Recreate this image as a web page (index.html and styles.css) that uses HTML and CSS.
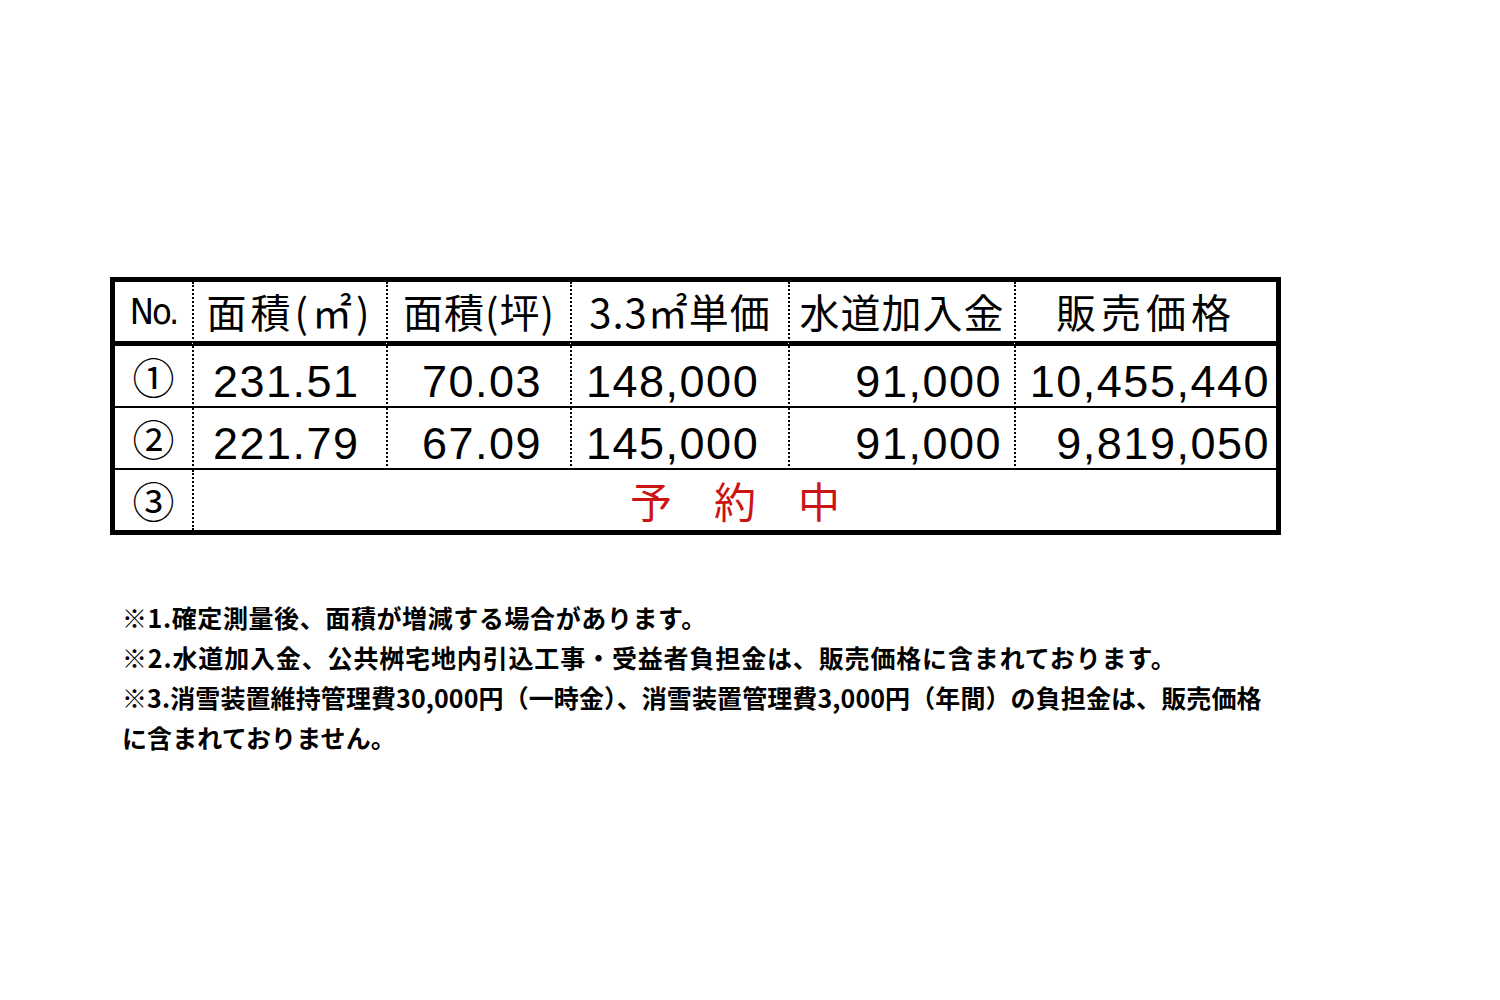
FILE: index.html
```html
<!DOCTYPE html>
<html lang="ja">
<head>
<meta charset="utf-8">
<title>販売価格表</title>
<link rel="stylesheet" href="styles.css">
</head>
<body>
<div class="page">
  <table class="price">
    <colgroup>
      <col class="c1"><col class="c2"><col class="c3"><col class="c4"><col class="c5"><col class="c6">
    </colgroup>
    <thead>
      <tr>
        <th class="no">No.</th>
        <th class="sq">面積(㎡)</th>
        <th>面積(坪)</th>
        <th>3.3㎡単価</th>
        <th>水道加入金</th>
        <th class="wide">販売価格</th>
      </tr>
    </thead>
    <tbody>
      <tr>
        <td class="circ">①</td>
        <td class="num a2">231.51</td>
        <td class="num a3">70.03</td>
        <td class="num a4">148,000</td>
        <td class="num a5">91,000</td>
        <td class="num a6">10,455,440</td>
      </tr>
      <tr>
        <td class="circ">②</td>
        <td class="num a2">221.79</td>
        <td class="num a3">67.09</td>
        <td class="num a4">145,000</td>
        <td class="num a5">91,000</td>
        <td class="num a6">9,819,050</td>
      </tr>
      <tr class="last">
        <td class="circ">③</td>
        <td class="reserved" colspan="5">予　約　中</td>
      </tr>
    </tbody>
  </table>
  <div class="notes">
    <p>※1.確定測量後、面積が増減する場合があります。</p>
    <p class="n2">※2.水道加入金、公共桝宅地内引込工事・受益者負担金は、販売価格に含まれております。</p>
    <p class="n3">※3.消雪装置維持管理費30,000円（一時金）、消雪装置管理費3,000円（年間）の負担金は、販売価格<br>に含まれておりません。</p>
  </div>
</div>
</body>
</html>
```
FILE: styles.css
```css
html, body {
  margin: 0;
  padding: 0;
  background: #ffffff;
  color: #000000;
}

.page {
  padding: 277px 0 0 110px;
  font-family: "Noto Sans CJK JP", "Liberation Sans", sans-serif;
}

.price {
  table-layout: fixed;
  border-collapse: separate;
  border-spacing: 0;
  border: 5px solid #000;
  width: 1171px;
  box-sizing: border-box;
}

.c1 { width: 77px; }
.c2 { width: 194px; }
.c3 { width: 184px; }
.c4 { width: 218px; }
.c5 { width: 226px; }
.c6 { width: 262px; }

.price th,
.price td {
  padding: 0;
  box-sizing: border-box;
  border-left: 2px dotted #000;
  white-space: nowrap;
  overflow: hidden;
}

.price th:first-child,
.price td:first-child {
  border-left: none;
}

.price th {
  height: 64px;
  border-bottom: 5px solid #000;
  font-weight: 400;
  font-size: 40px;
  line-height: 59px;
  text-align: center;
  letter-spacing: 1px;
}

.price th.no {
  font-family: "Liberation Sans Narrow", "DejaVu Sans Condensed", "Liberation Sans", sans-serif;
  font-size: 36px;
  letter-spacing: -2px;
}

.price th.sq {
  letter-spacing: 4px;
}

.price th.wide {
  letter-spacing: 5px;
}

.price td {
  height: 62px;
  border-bottom: 2px solid #000;
  vertical-align: middle;
}

.price tr.last td {
  height: 60px;
  border-bottom: none;
}

.circ {
  text-align: center;
  font-size: 42px;
  line-height: 58px;
}

.num {
  font-family: "Liberation Sans", Arial, sans-serif;
  font-size: 45px;
  letter-spacing: 1.5px;
  line-height: 48px;
  padding-top: 12px !important;
}

.a2 { text-align: left; padding-left: 19px !important; }
.a3 { text-align: right; padding-right: 28px !important; }
.a4 { text-align: left; padding-left: 14px !important; }
.a5 { text-align: right; padding-right: 12px !important; }
.a6 { text-align: right; padding-right: 6px !important; }

.reserved {
  text-align: center;
  color: #cc1414;
  font-size: 42px;
  line-height: 58px;
}

.notes {
  margin-top: 62px;
  padding-left: 12px;
  font-size: 25px;
  font-weight: 700;
  letter-spacing: 0.6px;
  line-height: 40px;
}

.notes p {
  margin: 0;
}

.notes .n2 {
  letter-spacing: 0.85px;
}

.notes .n3 {
  letter-spacing: 0.1px;
}
```
